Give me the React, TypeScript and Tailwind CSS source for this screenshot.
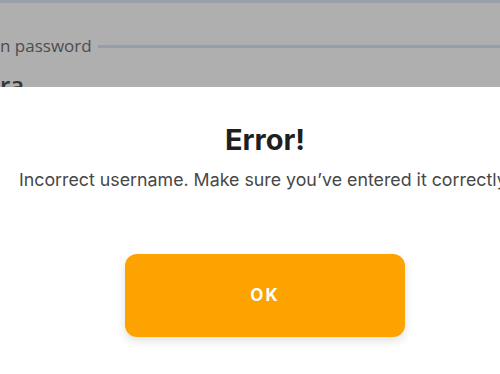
// Error alert sheet over a dimmed "change password" form.

export default function App() {
  return (
    <div className="h-[374px] w-[500px] overflow-hidden bg-white">
      {/* dimmed form behind the alert */}
      <div className="h-[87px] overflow-hidden border-t-[3px] border-[#9aa0a9] bg-[#afafaf]">
        <div className="mt-[33px] flex items-center gap-[6px]">
          <span className="text-[17px] leading-[20px] text-[#4d4d4d]" style={{ fontFamily: '"Open Sans", sans-serif' }}>
            n password
          </span>
          <div className="h-[3px] flex-1 bg-[#969dab]" />
        </div>
        <div className="mt-[14px] text-[24px] font-semibold leading-[30px] text-[#363636]" style={{ fontFamily: '"Open Sans", sans-serif' }}>
          ra
        </div>
      </div>

      {/* alert sheet */}
      <div className="flex w-[530px] flex-col items-center pt-[36px]" style={{ fontFamily: 'Inter, sans-serif' }}>
        <h2 className="text-[29px] font-bold leading-[34px] text-[#1f1f1f]">Error!</h2>
        <p className="mt-[11px] whitespace-nowrap text-[17.8px] leading-[24px] text-[#474747]">
          Incorrect username. Make sure you’ve entered it correctly.
        </p>
        <button className="mt-[62px] h-[83px] w-[280px] rounded-[12px] bg-[#fda300] text-[17px] font-bold tracking-[0.12em] text-white shadow-[0_4px_10px_rgba(0,0,0,0.12)]">
          OK
        </button>
      </div>
    </div>
  )
}
